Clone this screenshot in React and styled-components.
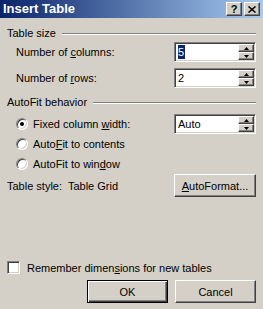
import React from "react";
import styled, { createGlobalStyle } from "styled-components";

const Global = createGlobalStyle`
  html, body { margin: 0; padding: 0; background: #d4d0c8; }
  body { font-family: "Liberation Sans", Arial, sans-serif; font-size: 11px; color: #000; }
`;

const Win = styled.div`
  width: 263px;
  height: 309px;
  background: #d4d0c8;
  display: flex;
  flex-direction: column;
  overflow: hidden;
`;

const TitleBar = styled.div`
  height: 18px;
  flex: none;
  display: flex;
  align-items: center;
  padding: 0 3px 0 3px;
  background: linear-gradient(to right, #0a246a, #a6caf0);
`;

const TitleText = styled.div`
  flex: 1;
  color: #fff;
  font-weight: bold;
  font-size: 13px;
  line-height: 18px;
`;

const CapButton = styled.div`
  width: 16px;
  height: 14px;
  box-sizing: border-box;
  margin-left: ${p => (p.$gap ? "2px" : "0")};
  background: #d4d0c8;
  border-style: solid;
  border-width: 1px;
  border-color: #fff #404040 #404040 #fff;
  box-shadow: inset -1px -1px #808080;
  display: flex;
  align-items: center;
  justify-content: center;
  font-weight: bold;
  font-size: 11px;
  line-height: 1;
  color: #000;
`;

const Body = styled.div`
  flex: 1;
  display: flex;
  flex-direction: column;
  padding: 0 7px 6px 7px;
`;

const SectionHeader = styled.div`
  margin-top: ${p => p.$mt}px;
  height: 14px;
  display: flex;
  align-items: center;
  gap: 6px;
`;

const Groove = styled.div`
  flex: 1;
  height: 0;
  border-top: 1px solid #808080;
  border-bottom: 1px solid #fff;
  margin-top: 1px;
`;

const FieldRow = styled.div`
  margin-top: ${p => p.$mt}px;
  height: 20px;
  display: flex;
  align-items: center;
  padding-left: 9px;
`;

const Label = styled.div`
  flex: 1;
  white-space: nowrap;
`;

const SpinBox = styled.div`
  width: 82px;
  height: 20px;
  box-sizing: border-box;
  border-style: solid;
  border-width: 1px;
  border-color: #808080 #fff #fff #808080;
  box-shadow: inset 1px 1px #404040, inset -1px -1px #d4d0c8;
  background: #fff;
  display: flex;
  align-items: center;
  padding: 2px 1px 2px 3px;
`;

const SpinValue = styled.div`
  flex: 1;
  display: flex;
  align-items: center;
  height: 14px;
`;

const Selected = styled.span`
  background: #0a246a;
  color: #fff;
  line-height: 14px;
  padding: 0 1px 0 0;
`;

const SpinBtns = styled.div`
  width: 16px;
  height: 16px;
  display: flex;
  flex-direction: column;
`;

const SpinBtn = styled.div`
  flex: 1;
  box-sizing: border-box;
  background: #d4d0c8;
  border-style: solid;
  border-width: 1px;
  border-color: #fff #404040 #404040 #fff;
  box-shadow: inset -1px -1px #808080;
  display: flex;
  align-items: center;
  justify-content: center;
`;

const Tri = ({ up }) => (
  <svg width="5" height="3" viewBox="0 0 5 3" style={{ display: "block" }}>
    {up ? <path d="M2.5 0 L5 3 L0 3 Z" fill="#000" /> : <path d="M0 0 L5 0 L2.5 3 Z" fill="#000" />}
  </svg>
);

const RadioRow = styled.div`
  margin-top: ${p => p.$mt || 0}px;
  height: 20px;
  display: flex;
  align-items: center;
  padding-left: 9px;
`;

const Radio = styled.div`
  width: 12px;
  height: 12px;
  box-sizing: border-box;
  border-radius: 50%;
  border-style: solid;
  border-width: 1px;
  border-color: #808080 #fff #fff #808080;
  box-shadow: inset 1px 1px #404040, inset -1px -1px #d4d0c8;
  background: #fff;
  display: flex;
  align-items: center;
  justify-content: center;
  margin-right: 5px;
  &::after {
    content: "";
    width: 4px;
    height: 4px;
    border-radius: 50%;
    background: ${p => (p.$on ? "#000" : "transparent")};
  }
`;

const Check = styled.div`
  width: 13px;
  height: 13px;
  box-sizing: border-box;
  border-style: solid;
  border-width: 1px;
  border-color: #808080 #fff #fff #808080;
  box-shadow: inset 1px 1px #404040, inset -1px -1px #d4d0c8;
  background: #fff;
  margin-right: 7px;
`;

const Button = styled.div`
  width: ${p => p.$w || 81}px;
  height: 23px;
  box-sizing: border-box;
  background: #d4d0c8;
  border-style: solid;
  border-width: 1px;
  border-color: ${p => (p.$default ? "#000" : "#fff #404040 #404040 #fff")};
  box-shadow: ${p =>
    p.$default
      ? "inset 1px 1px #fff, inset -1px -1px #404040, inset -2px -2px #808080"
      : "inset -1px -1px #808080"};
  display: flex;
  align-items: center;
  justify-content: center;
`;

const Spacer = styled.div`
  flex: 1;
`;

const CheckRow = styled.div`
  height: 13px;
  display: flex;
  align-items: center;
`;

const ButtonRow = styled.div`
  margin-top: 6px;
  display: flex;
  justify-content: flex-end;
  gap: 7px;
`;

const StyleRow = styled.div`
  height: 23px;
  display: flex;
  align-items: center;
`;

const StyleLabel = styled.div`
  flex: 1;
  white-space: pre;
`;

const Spin = ({ children }) => (
  <SpinBox>
    <SpinValue>{children}</SpinValue>
    <SpinBtns>
      <SpinBtn><Tri up /></SpinBtn>
      <SpinBtn><Tri /></SpinBtn>
    </SpinBtns>
  </SpinBox>
);

export default function App() {
  return (
    <>
      <Global />
      <Win>
        <TitleBar>
          <TitleText>Insert Table</TitleText>
          <CapButton>?</CapButton>
          <CapButton $gap>
            <svg width="8" height="7" viewBox="0 0 8 7" style={{ display: "block" }}>
              <path d="M0.5 0.5 L7.5 6.5 M7.5 0.5 L0.5 6.5" stroke="#000" strokeWidth="1.5" />
            </svg>
          </CapButton>
        </TitleBar>
        <Body>
          <SectionHeader $mt={8}>
            <span>Table size</span>
            <Groove />
          </SectionHeader>
          <FieldRow $mt={2}>
            <Label>Number of <u>c</u>olumns:</Label>
            <Spin><Selected>5</Selected></Spin>
          </FieldRow>
          <FieldRow $mt={6}>
            <Label>Number of <u>r</u>ows:</Label>
            <Spin>2</Spin>
          </FieldRow>
          <SectionHeader $mt={7}>
            <span>AutoFit behavior</span>
            <Groove />
          </SectionHeader>
          <RadioRow $mt={5}>
            <Radio $on />
            <Label>Fixed column <u>w</u>idth:</Label>
            <Spin>Auto</Spin>
          </RadioRow>
          <RadioRow>
            <Radio />
            <Label>Auto<u>F</u>it to contents</Label>
          </RadioRow>
          <RadioRow>
            <Radio />
            <Label>AutoFit to win<u>d</u>ow</Label>
          </RadioRow>
          <StyleRow>
            <StyleLabel>Table style:  Table Grid</StyleLabel>
            <Button $w={82}><span><u>A</u>utoFormat...</span></Button>
          </StyleRow>
          <Spacer />
          <CheckRow>
            <Check />
            <span>Remember dimen<u>s</u>ions for new tables</span>
          </CheckRow>
          <ButtonRow>
            <Button $default>OK</Button>
            <Button>Cancel</Button>
          </ButtonRow>
        </Body>
      </Win>
    </>
  );
}
